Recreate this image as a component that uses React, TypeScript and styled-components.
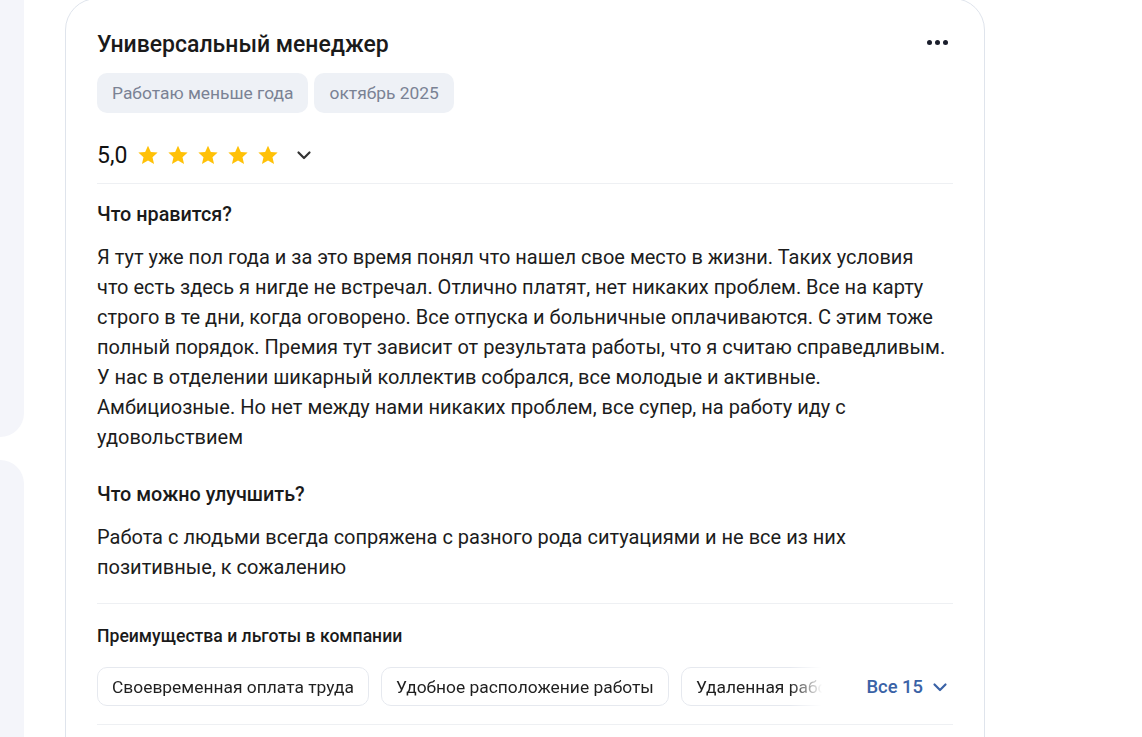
import styled, { createGlobalStyle } from "styled-components";

const GlobalStyle = createGlobalStyle`
  html, body {
    margin: 0;
    padding: 0;
    background: #ffffff;
    font-family: Roboto, "Liberation Sans", Arial, sans-serif;
    color: #1f1f1f;
    overflow: hidden;
  }
`;

const Page = styled.div`
  display: flex;
  align-items: flex-start;
  gap: 41px;
  height: 737px;
  overflow: hidden;
`;

const Sidebar = styled.div`
  width: 24px;
  display: flex;
  flex-direction: column;
  gap: 23px;
  flex-shrink: 0;
`;

const SideBlock = styled.div<{ $h: number; $top?: boolean }>`
  height: ${(p) => p.$h}px;
  background: #f4f5fa;
  border-radius: ${(p) => (p.$top ? "0 24px 0 0" : "0 0 24px 0")};
`;

const Card = styled.div`
  width: 856px;
  margin-top: -2px;
  padding: 32px 31px 80px 31px;
  border: 1px solid #dfe4ec;
  border-radius: 32px;
  background: #fff;
`;

const Header = styled.div`
  display: flex;
  align-items: flex-start;
  justify-content: space-between;
`;

const Title = styled.h2`
  margin: 0;
  font-size: 23px;
  line-height: 28px;
  font-weight: 500;
  color: #1a1a1a;
`;

const MoreBtn = styled.button`
  border: none;
  background: none;
  padding: 0;
  margin: 9px 5px 0 0;
  display: flex;
  gap: 3px;
  cursor: pointer;
  span {
    width: 5px;
    height: 5px;
    border-radius: 50%;
    background: #1a1e2c;
  }
`;

const Tags = styled.div`
  display: flex;
  gap: 6px;
  margin-top: 14px;
`;

const Tag = styled.span`
  height: 40px;
  display: flex;
  align-items: center;
  padding: 0 15px;
  border-radius: 10px;
  background: #eef1f6;
  color: #7a8294;
  font-size: 17.4px;
`;

const RatingRow = styled.div`
  display: flex;
  align-items: center;
  height: 24px;
  margin-top: 30px;
  padding-bottom: 16px;
  border-bottom: 1px solid #eef0f3;
`;

const Score = styled.span`
  font-size: 23px;
  color: #111;
  margin-right: 10px;
`;

const Stars = styled.div`
  display: flex;
  gap: 8px;
  margin-right: 16px;
`;

const Section = styled.div`
  padding-top: 19px;
`;

const SectionTitle = styled.h3<{ $small?: boolean }>`
  margin: 0;
  font-size: ${(p) => (p.$small ? "17.6px" : "19.8px")};
  line-height: ${(p) => (p.$small ? "22px" : "24px")};
  font-weight: 500;
  color: #1a1a1a;
`;

const Text = styled.p`
  margin: 15px -8px 0 0;
  font-size: 20px;
  line-height: 30px;
  color: #1c1c1c;
`;

const Gap = styled.div`
  height: 31px;
`;

const Divider = styled.div`
  height: 1px;
  background: #eef0f3;
  margin-top: 21px;
`;

const PerksSection = styled.div`
  padding-top: 21px;
`;

const PerksRow = styled.div`
  display: flex;
  align-items: center;
  margin-top: 20px;
  padding-bottom: 18px;
  border-bottom: 1px solid #eef0f3;
`;

const ChipsViewport = styled.div`
  flex: 1;
  display: flex;
  gap: 12px;
  overflow: hidden;
  margin-right: 44px;
  -webkit-mask-image: linear-gradient(to right, #000 calc(100% - 32px), transparent 100%);
  mask-image: linear-gradient(to right, #000 calc(100% - 32px), transparent 100%);
`;

const Chip = styled.span`
  flex-shrink: 0;
  height: 37px;
  display: flex;
  align-items: center;
  padding: 0 14px;
  border: 1px solid #e6e9ef;
  border-radius: 10px;
  font-size: 17.4px;
  color: #1f1f1f;
`;

const ShowAll = styled.button`
  border: none;
  background: none;
  padding: 0;
  display: flex;
  align-items: center;
  gap: 8px;
  font-family: inherit;
  font-size: 18.4px;
  font-weight: 500;
  color: #3a62a6;
  cursor: pointer;
  margin-right: 4px;
`;

const Star = () => (
  <svg width="22" height="22" viewBox="0 0 24 24">
    <path
      d="M12 1.8l3.1 6.9 7.4.7-5.6 5 1.7 7.4L12 17.9l-6.6 3.9 1.7-7.4-5.6-5 7.4-.7z"
      fill="#ffc107"
    />
  </svg>
);

const Chevron = ({ color, size }: { color: string; size: number }) => (
  <svg width={size} height={size} viewBox="0 0 18 18" fill="none">
    <path
      d="M3.5 6.5L9 12l5.5-5.5"
      stroke={color}
      strokeWidth="2.2"
      strokeLinecap="round"
      strokeLinejoin="round"
    />
  </svg>
);

const perks = [
  "Своевременная оплата труда",
  "Удобное расположение работы",
  "Удаленная работа",
];

export default function App() {
  return (
    <>
      <GlobalStyle />
      <Page>
        <Sidebar>
          <SideBlock $h={437} />
          <SideBlock $h={300} $top />
        </Sidebar>
        <Card>
          <Header>
            <Title>Универсальный менеджер</Title>
            <MoreBtn aria-label="Ещё">
              <span />
              <span />
              <span />
            </MoreBtn>
          </Header>
          <Tags>
            <Tag>Работаю меньше года</Tag>
            <Tag>октябрь 2025</Tag>
          </Tags>
          <RatingRow>
            <Score>5,0</Score>
            <Stars>
              {[0, 1, 2, 3, 4].map((i) => (
                <Star key={i} />
              ))}
            </Stars>
            <Chevron color="#333" size={18} />
          </RatingRow>
          <Section>
            <SectionTitle>Что нравится?</SectionTitle>
            <Text>
              Я тут уже пол года и за это время понял что нашел свое место в жизни. Таких условия
              <br />
              что есть здесь я нигде не встречал. Отлично платят, нет никаких проблем. Все на карту
              <br />
              строго в те дни, когда оговорено. Все отпуска и больничные оплачиваются. С этим тоже
              <br />
              полный порядок. Премия тут зависит от результата работы, что я считаю справедливым.
              <br />
              У нас в отделении шикарный коллектив собрался, все молодые и активные.
              <br />
              Амбициозные. Но нет между нами никаких проблем, все супер, на работу иду с
              <br />
              удовольствием
            </Text>
            <Gap />
            <SectionTitle>Что можно улучшить?</SectionTitle>
            <Text>
              Работа с людьми всегда сопряжена с разного рода ситуациями и не все из них
              <br />
              позитивные, к сожалению
            </Text>
            <Divider />
          </Section>
          <PerksSection>
            <SectionTitle $small>Преимущества и льготы в компании</SectionTitle>
            <PerksRow>
              <ChipsViewport>
                {perks.map((p) => (
                  <Chip key={p}>{p}</Chip>
                ))}
              </ChipsViewport>
              <ShowAll>
                Все 15
                <Chevron color="#3a62a6" size={18} />
              </ShowAll>
            </PerksRow>
          </PerksSection>
        </Card>
      </Page>
    </>
  );
}
